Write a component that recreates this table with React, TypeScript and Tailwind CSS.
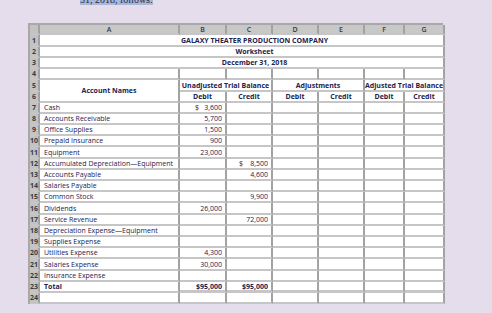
import React from 'react';

const line = 'border-r-2 border-b-2 border-r-[#a2a2a2] border-b-[#c6c6c6]';
const ink = 'text-[#22224f]';

type Row = { n: number; name: string; debit?: string; credit?: string; dollarD?: boolean; dollarC?: boolean };

const rows: Row[] = [
  { n: 7, name: 'Cash', debit: '3,600', dollarD: true },
  { n: 8, name: 'Accounts Receivable', debit: '5,700' },
  { n: 9, name: 'Office Supplies', debit: '1,500' },
  { n: 10, name: 'Prepaid Insurance', debit: '900' },
  { n: 11, name: 'Equipment', debit: '23,000' },
  { n: 12, name: 'Accumulated Depreciation\u2014Equipment', credit: '8,500', dollarC: true },
  { n: 13, name: 'Accounts Payable', credit: '4,600' },
  { n: 14, name: 'Salaries Payable' },
  { n: 15, name: 'Common Stock', credit: '9,900' },
  { n: 16, name: 'Dividends', debit: '26,000' },
  { n: 17, name: 'Service Revenue', credit: '72,000' },
  { n: 18, name: 'Depreciation Expense\u2014Equipment' },
  { n: 19, name: 'Supplies Expense' },
  { n: 20, name: 'Utilities Expense', debit: '4,300' },
  { n: 21, name: 'Salaries Expense', debit: '30,000' },
  { n: 22, name: 'Insurance Expense' },
];

const RowNum = ({ n }: { n: number }) => (
  <div className={`${line} bg-[#c3c3c3] flex items-center justify-center text-[7px] font-bold text-[#3c3c3c]`}>
    {n}
  </div>
);

const Amount = ({ value, dollar, pad, extra = '' }: { value?: string; dollar?: boolean; pad: string; extra?: string }) => (
  <div className={`${line} ${extra} bg-white flex items-center pr-[3px] ${ink}`}>
    {dollar && <span className={pad}>$</span>}
    <span className="ml-auto">{value}</span>
  </div>
);

const Empty = ({ extra = '' }: { extra?: string }) => <div className={`${line} ${extra} bg-white`} />;

const App = () => {
  return (
    <div className="w-[492px] h-[313px] overflow-hidden bg-[#e5dcec] font-['Open_Sans',sans-serif]">
      <p className="-mt-[7px] h-[13px] pl-[80px] font-['Liberation_Serif',serif] text-[10px] leading-[13px] text-[#2b2b3b]">
        <span className="bg-[#a9b7da]">31, 2018, follows.</span>
      </p>

      <div className="mt-[17px] ml-[28px] w-[415px] grid grid-cols-[10px_140px_47px_46px_46px_46px_40px_40px] grid-rows-[10px_12px_11px_11px_11px_12px_11px_11px_11px_11px_11px_12px_11px_11px_11px_11px_12px_11px_11px_11px_11px_12px_11px_11px_11px] border-l-2 border-t-2 border-[#a8a8a8] text-[7px] leading-[9px] font-medium">
        {/* column letters */}
        <div className={`${line} bg-[#c3c3c3]`} />
        {['A', 'B', 'C', 'D', 'E', 'F', 'G'].map((c) => (
          <div key={c} className={`${line} bg-[#c8c8c8] flex items-center justify-center font-semibold text-[#3a3a3a]`}>
            {c}
          </div>
        ))}

        {/* title rows */}
        {['GALAXY THEATER PRODUCTION COMPANY', 'Worksheet', 'December 31, 2018'].map((t, i) => (
          <React.Fragment key={t}>
            <RowNum n={i + 1} />
            <div className={`${line} col-span-7 bg-white flex items-center justify-center pl-[26px] font-bold ${ink}`}>
              {t}
            </div>
          </React.Fragment>
        ))}

        <RowNum n={4} />
        {[0, 1, 2, 3, 4, 5, 6].map((i) => (
          <Empty key={i} />
        ))}

        {/* headings */}
        <RowNum n={5} />
        <div className={`${line} row-span-2 bg-white flex items-center justify-center font-bold ${ink}`}>
          Account Names
        </div>
        <div className={`${line} col-span-2 bg-white flex items-center justify-center font-bold ${ink}`}>
          Unadjusted Trial Balance
        </div>
        <div className={`${line} col-span-2 bg-white flex items-center justify-center font-bold ${ink}`}>
          Adjustments
        </div>
        <div className={`${line} col-span-2 bg-white flex items-center justify-center font-bold ${ink} whitespace-nowrap`}>
          Adjusted Trial Balance
        </div>
        <RowNum n={6} />
        {['Debit', 'Credit', 'Debit', 'Credit', 'Debit', 'Credit'].map((t, i) => (
          <div key={i} className={`${line} bg-white flex items-center justify-center font-bold ${ink}`}>
            {t}
          </div>
        ))}

        {/* accounts */}
        {rows.map((r) => {
          const last = r.n === 22 ? 'border-b-[#2e2e2e]' : '';
          return (
            <React.Fragment key={r.n}>
              <RowNum n={r.n} />
              <div className={`${line} bg-white flex items-center pl-[4px] whitespace-nowrap ${ink}`}>{r.name}</div>
              <Amount value={r.debit} dollar={r.dollarD} pad="pl-[15px]" extra={last} />
              <Amount value={r.credit} dollar={r.dollarC} pad="pl-[12px]" extra={last} />
              <Empty extra={last} />
              <Empty extra={last} />
              <Empty extra={last} />
              <Empty extra={last} />
            </React.Fragment>
          );
        })}

        {/* total */}
        <RowNum n={23} />
        <div className={`${line} bg-white flex items-center pl-[4px] font-bold ${ink}`}>Total</div>
        <Amount value="$95,000" pad="" extra="font-bold border-b-[3px] border-b-[#4a4a4a]" />
        <Amount value="$95,000" pad="" extra="font-bold border-b-[3px] border-b-[#4a4a4a]" />
        {[0, 1, 2, 3].map((i) => (
          <Empty key={i} extra="border-b-[3px] border-b-[#4a4a4a]" />
        ))}

        <RowNum n={24} />
        {[0, 1, 2, 3, 4, 5, 6].map((i) => (
          <Empty key={i} />
        ))}
      </div>
    </div>
  );
};

export default App;
